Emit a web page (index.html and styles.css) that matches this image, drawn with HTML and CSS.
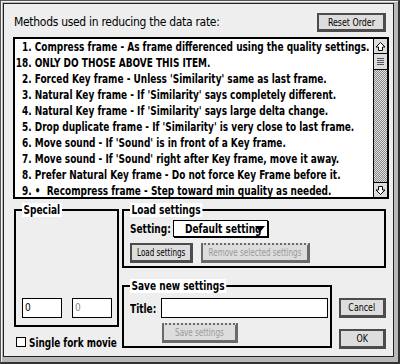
FILE: index.html
```html
<!DOCTYPE html>
<html>
<head>
<meta charset="utf-8">
<link rel="stylesheet" href="styles.css">
</head>
<body>
<div class="window">
  <div class="dialog">
    <div class="header">
      <span class="title">Methods used in reducing the data rate:</span>
      <div class="btn reset"><span class="bt">Reset Order</span></div>
    </div>
    <div class="list">
      <ul class="items">
        <li><span class="num">1.</span> Compress frame - As frame differenced using the quality settings.</li>
        <li><span class="num">18.</span> ONLY DO THOSE ABOVE THIS ITEM.</li>
        <li><span class="num">2.</span> Forced Key frame - Unless 'Similarity' same as last frame.</li>
        <li><span class="num">3.</span> Natural Key frame - If 'Similarity' says completely different.</li>
        <li><span class="num">4.</span> Natural Key frame - If 'Similarity' says large delta change.</li>
        <li><span class="num">5.</span> Drop duplicate frame - If 'Similarity' is very close to last frame.</li>
        <li><span class="num">6.</span> Move sound - If 'Sound' is in front of a Key frame.</li>
        <li><span class="num">7.</span> Move sound - If 'Sound' right after Key frame, move it away.</li>
        <li><span class="num">8.</span> Prefer Natural Key frame - Do not force Key Frame before it.</li>
        <li><span class="num">9.</span> •&nbsp; Recompress frame - Step toward min quality as needed.</li>
      </ul>
      <div class="scrollbar">
        <div class="arrow">
          <svg width="11" height="11" viewBox="0 0 11 11"><polygon points="5.5,1.5 10,6 7.5,6 7.5,9.5 3.5,9.5 3.5,6 1,6" fill="#fff" stroke="#000" stroke-width="1"/></svg>
        </div>
        <div class="thumb"><i></i><i></i><i></i><i></i></div>
        <div class="track"></div>
        <div class="arrow down">
          <svg width="11" height="11" viewBox="0 0 11 11"><polygon points="5.5,9.5 10,5 7.5,5 7.5,1.5 3.5,1.5 3.5,5 1,5" fill="#fff" stroke="#000" stroke-width="1"/></svg>
        </div>
      </div>
    </div>
    <div class="bottom">
      <div class="leftcol">
        <div class="group special">
          <span class="glabel">Special</span>
          <div class="fields">
            <div class="field small">0</div>
            <div class="field small dim">0</div>
          </div>
        </div>
        <div class="check">
          <span class="box"></span>
          <span class="checklabel">Single fork movie</span>
        </div>
      </div>
      <div class="rightcol">
        <div class="group load">
          <span class="glabel">Load settings</span>
          <div class="setrow">
            <span class="lbl setlbl"><span class="lt">Setting:</span></span>
            <div class="popup"><span class="ptext">Default setting</span><span class="tri"></span></div>
          </div>
          <div class="btnrow">
            <div class="btn sm loadbtn"><span class="bt">Load settings</span></div>
            <div class="btn sm disabled removebtn"><span class="bt">Remove selected settings</span></div>
          </div>
        </div>
        <div class="saverow">
          <div class="group save">
            <span class="glabel">Save new settings</span>
            <div class="titlerow">
              <span class="lbl titlelbl"><span class="lt">Title:</span></span>
              <div class="field titlefield"></div>
            </div>
            <div class="btn sm disabled savebtn"><span class="bt">Save settings</span></div>
          </div>
          <div class="okcol">
            <div class="btn action"><span class="bt">Cancel</span></div>
            <div class="btn action"><span class="bt">OK</span></div>
          </div>
        </div>
      </div>
    </div>
  </div>
</div>
</body>
</html>
```
FILE: styles.css
```css
html, body {
  margin: 0;
  padding: 0;
  background: #eeeeee;
}
body {
  font-family: "DejaVu Sans Condensed", "DejaVu Sans", sans-serif;
  color: #000;
}
.window {
  box-sizing: border-box;
  width: 400px;
  height: 364px;
  border: 1px solid #555;
  border-right: 2px solid #333;
  border-bottom: 2px solid #333;
  padding: 2px 4px 5px 2px;
  background: #b8b8b8;
  box-shadow: inset 1px 1px 0 #f4f4f4;
}
.dialog {
  box-sizing: border-box;
  height: 100%;
  border: 1px solid #222;
  background: #eeeeee;
  padding: 9px 4px 0 9px;
}
.header {
  display: flex;
  justify-content: space-between;
  align-items: center;
  height: 18px;
  padding-left: 1px;
}
.title {
  font-size: 12px;
  letter-spacing: -0.3px;
  white-space: nowrap;
}
.btn {
  box-sizing: border-box;
  display: flex;
  align-items: center;
  justify-content: center;
  background: #dddddd;
  border: 2px solid #4c4c4c;
  border-right-width: 3px;
  border-bottom-width: 3px;
  font-size: 11px;
  white-space: nowrap;
}
.bt {
  display: inline-block;
  transform: scaleX(0.8);
  transform-origin: center;
}
.reset {
  width: 69px;
  height: 19px;
  margin-right: 3px;
  margin-top: 1px;
}
.list {
  box-sizing: border-box;
  margin-top: 6px;
  width: 376px;
  height: 162px;
  border: 2px solid #000;
  background: #fff;
  display: flex;
  overflow: hidden;
}
.items {
  flex: 1;
  margin: 0;
  padding: 0;
  list-style: none;
  font-weight: bold;
  font-size: 12px;
  line-height: 16px;
  white-space: nowrap;
  overflow: hidden;
}
.items li {
  transform: scaleX(0.83);
  transform-origin: left center;
  padding-left: 1px;
}
.num {
  display: inline-block;
  width: 19px;
  text-align: right;
}
.scrollbar {
  flex: 0 0 13px;
  border-left: 1px solid #000;
  display: flex;
  flex-direction: column;
}
.arrow {
  box-sizing: border-box;
  height: 15px;
  display: flex;
  align-items: center;
  justify-content: center;
  background: #dddddd;
  border-bottom: 1px solid #000;
}
.arrow.down {
  border-bottom: none;
  border-top: 1px solid #000;
}
.thumb {
  box-sizing: border-box;
  height: 16px;
  background: #dddddd;
  border-bottom: 1px solid #000;
  display: flex;
  flex-direction: column;
  justify-content: center;
  align-items: center;
  gap: 1px;
}
.thumb i {
  display: block;
  width: 7px;
  height: 1px;
  background: #555;
}
.track {
  flex: 1;
  background: repeating-conic-gradient(#8a8a8a 0 25%, #e0e0e0 0 50%) 0 0 / 2px 2px;
}
.bottom {
  display: flex;
  margin-top: 10px;
  padding-left: 1px;
  gap: 3px;
}
.group {
  box-sizing: border-box;
  position: relative;
  border: 2px solid #000;
}
.glabel {
  position: absolute;
  top: -8px;
  left: 6px;
  background: #fff;
  padding: 0 2px;
  font-weight: bold;
  font-size: 13px;
  line-height: 14px;
  white-space: nowrap;
  transform: scaleX(0.77);
  transform-origin: left center;
}
.leftcol {
  width: 105px;
}
.special {
  height: 118px;
  display: flex;
  flex-direction: column;
  justify-content: flex-end;
  padding: 0 5px 7px 6px;
}
.fields {
  display: flex;
  justify-content: space-between;
}
.field {
  box-sizing: border-box;
  border: 1px solid #000;
  background: #fff;
  height: 20px;
}
.field.small {
  width: 40px;
  font-size: 10px;
  line-height: 18px;
  padding-left: 2px;
}
.field.dim {
  color: #888;
}
.check {
  display: flex;
  align-items: center;
  gap: 3px;
  margin-top: 8px;
  padding-left: 2px;
  height: 14px;
}
.box {
  box-sizing: border-box;
  flex: 0 0 10px;
  height: 10px;
  border: 1px solid #000;
  background: #fff;
}
.checklabel {
  display: inline-block;
  min-width: 0;
  font-weight: bold;
  font-size: 13px;
  white-space: nowrap;
  transform: scaleX(0.76);
  transform-origin: left center;
}
.rightcol {
  width: 264px;
}
.load {
  height: 59px;
  padding: 9px 0 0 6px;
}
.setrow {
  display: flex;
  align-items: center;
}
.lbl {
  min-width: 0;
  font-weight: bold;
  font-size: 13px;
  white-space: nowrap;
}
.lt {
  display: inline-block;
  transform: scaleX(0.77);
  transform-origin: left center;
}
.setlbl {
  flex: 0 0 43px;
}
.titlelbl {
  flex: 0 0 31px;
}
.popup {
  position: relative;
  box-sizing: border-box;
  flex: 0 0 95px;
  height: 17px;
  border: 1px solid #000;
  background: #fff;
  box-shadow: 1px 1px 0 #000;
  overflow: hidden;
  padding-left: 11px;
  font-weight: bold;
  font-size: 13px;
  line-height: 15px;
  white-space: nowrap;
}
.ptext {
  display: inline-block;
  transform: scaleX(0.77);
  transform-origin: left center;
}
.tri {
  position: absolute;
  right: 2px;
  top: 5px;
  width: 0;
  height: 0;
  border-left: 5px solid transparent;
  border-right: 5px solid transparent;
  border-top: 6px solid #000;
}
.btnrow {
  display: flex;
  gap: 8px;
  margin-top: 6px;
}
.btn.sm {
  height: 20px;
  font-size: 10px;
}
.loadbtn {
  width: 63px;
}
.removebtn {
  width: 109px;
}
.btn.disabled {
  color: #9a9a9a;
  border-color: #6a6a6a;
  border-top-style: dotted;
}
.saverow {
  display: flex;
  gap: 7px;
  margin-top: 17px;
}
.save {
  width: 210px;
  height: 63px;
  padding: 11px 0 0 6px;
}
.titlerow {
  display: flex;
  align-items: center;
}
.titlefield {
  flex: 0 0 167px;
}
.savebtn {
  width: 76px;
  margin-top: 5px;
  margin-left: 32px;
}
.okcol {
  display: flex;
  flex-direction: column;
  gap: 11px;
  padding-top: 13px;
}
.btn.action {
  width: 47px;
  height: 20px;
  font-size: 11px;
}
```
